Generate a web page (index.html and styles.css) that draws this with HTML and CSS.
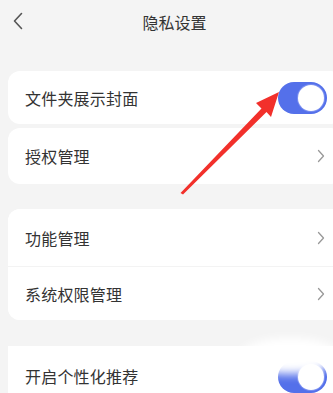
FILE: index.html
```html
<!DOCTYPE html>
<html lang="zh">
<head>
<meta charset="utf-8">
<link rel="stylesheet" href="styles.css">
</head>
<body>
<div class="page">
  <header class="topbar">
    <svg class="back" width="12" height="18" viewBox="0 0 12 18"><path d="M9.5 1.5 L2.5 9 L9.5 16.5" fill="none" stroke="#555" stroke-width="1.6" stroke-linecap="round" stroke-linejoin="round"/></svg>
    <div class="title">隐私设置</div>
  </header>

  <section class="group g1">
    <div class="row r1">
      <span class="label">文件夹展示封面</span>
      <span class="toggle"><span class="knob"></span></span>
    </div>
    <div class="row r2">
      <span class="label">授权管理</span>
      <svg class="chev" width="8" height="14" viewBox="0 0 8 14"><path d="M1.5 1.5 L6.5 7 L1.5 12.5" fill="none" stroke="#999" stroke-width="1.3" stroke-linecap="round" stroke-linejoin="round"/></svg>
    </div>
  </section>

  <section class="group g2">
    <div class="row r3">
      <span class="label">功能管理</span>
      <svg class="chev" width="8" height="14" viewBox="0 0 8 14"><path d="M1.5 1.5 L6.5 7 L1.5 12.5" fill="none" stroke="#999" stroke-width="1.3" stroke-linecap="round" stroke-linejoin="round"/></svg>
    </div>
    <div class="row r4">
      <span class="label">系统权限管理</span>
      <svg class="chev" width="8" height="14" viewBox="0 0 8 14"><path d="M1.5 1.5 L6.5 7 L1.5 12.5" fill="none" stroke="#999" stroke-width="1.3" stroke-linecap="round" stroke-linejoin="round"/></svg>
    </div>
  </section>

  <section class="group g3">
    <div class="row r5">
      <span class="label">开启个性化推荐</span>
      <span class="toggle"><span class="knob"></span></span>
    </div>
  </section>

  <div class="blob"></div>

  <svg class="arrow" width="333" height="393" viewBox="0 0 333 393">
    <path d="M180.5 193 L261.5 108.5 L256 103 L279 92 L271 117 L266.5 112 L183 194.5 Z" fill="#f2302b"/>
  </svg>
</div>
</body>
</html>
```

FILE: styles.css
```css
* { box-sizing: border-box; }
html, body { margin: 0; padding: 0; }
body {
  width: 333px;
  height: 393px;
  overflow: hidden;
  background: #f4f4f4;
  font-family: "Noto Sans CJK SC", "Noto Sans", sans-serif;
  color: #333;
}
.page {
  position: relative;
  width: 333px;
  height: 393px;
  padding-left: 8px;
}
.topbar {
  position: relative;
  height: 44px;
  display: flex;
  align-items: center;
  margin-left: -8px;
}
.back {
  position: absolute;
  left: 12px;
  top: 12px;
}
.title {
  flex: 1;
  text-align: center;
  font-size: 16px;
  color: #333;
  padding-left: 16px;
  margin-top: -1px;
}
.group {
  margin-right: -10px;
  display: flex;
  flex-direction: column;
}
.g1 { margin-top: 27px; gap: 4px; }
.g2 { margin-top: 25px; background: #fff; border-radius: 12px; }
.g3 { margin-top: 26px; background: #fff; border-radius: 12px 12px 0 0; }
.row {
  display: flex;
  align-items: center;
  justify-content: space-between;
  padding: 0 18px 0 17px;
  background: #fff;
}
.label { font-size: 16px; letter-spacing: 0.2px; }
.r1 { height: 53px; border-radius: 12px; }
.r2 { height: 56px; border-radius: 12px; }
.r3 { height: 58px; border-radius: 12px 12px 0 0; border-bottom: 1px solid #f3f3f3; }
.r4 { height: 53px; border-radius: 0 0 12px 12px; }
.r5 { height: 60px; }
.toggle {
  width: 49px;
  height: 32px;
  border-radius: 16px;
  background: #5470ea;
  position: relative;
  margin-right: -2px;
}
.knob {
  position: absolute;
  right: 3px;
  top: 3px;
  width: 26px;
  height: 26px;
  border-radius: 50%;
  background: #fff;
  box-shadow: 0 0 0 1px #7a8ff0;
}
.r5 .toggle { margin-top: 2px; }
.blob {
  position: absolute;
  left: 240px;
  top: 338px;
  width: 100px;
  height: 36px;
  border-radius: 50%;
  background: #fff;
  filter: blur(5px);
}
.arrow {
  position: absolute;
  left: 0;
  top: 0;
  pointer-events: none;
}
```
